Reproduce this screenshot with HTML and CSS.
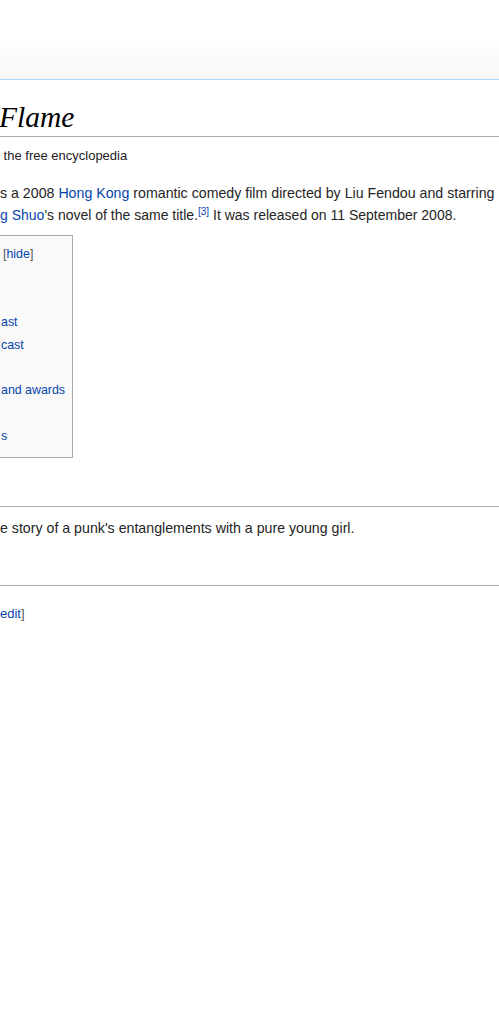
FILE: index.html
```html
<!DOCTYPE html>
<html lang="en">
<head>
    <meta charset="UTF-8">
    <meta name="viewport" content="width=device-width, initial-scale=1.0">
    <title>Flame</title>
    <link rel="stylesheet" href="styles.css">
</head>
<body>
    <div class="head"></div>

    <div class="content">
        <h1 class="first-heading">Flame</h1>
        <div class="site-sub">&nbsp;the free encyclopedia</div>

        <p class="lead">
            s a 2008 <a href="#">Hong Kong</a> romantic comedy film directed by Liu Fendou and starring<br>
            <span class="tight"><a href="#">g Shuo</a>'s novel of the same title.<sup><a href="#">[3]</a></sup> It was released on 11 September 2008.</span>
        </p>

        <div class="toc">
            <div class="toc-title"><span class="bracket">[</span><a href="#">hide</a><span class="bracket">]</span></div>
            <ul>
                <li>&nbsp;</li>
                <li>&nbsp;</li>
                <li><a href="#">ast</a></li>
                <li><a href="#">cast</a></li>
                <li>&nbsp;</li>
                <li><a href="#">and awards</a></li>
                <li>&nbsp;</li>
                <li><a href="#">s</a></li>
            </ul>
        </div>

        <h2>&nbsp;</h2>
        <p>e story of a punk's entanglements with a pure young girl.</p>

        <h2>&nbsp;</h2>
        <h3><span class="edit"><a href="#">edit</a><span class="bracket">]</span></span></h3>
    </div>
</body>
</html>
```

FILE: styles.css
```css
html, body {
    margin: 0;
    padding: 0;
    overflow: hidden;
}

body {
    font-family: "Liberation Sans", Arial, sans-serif;
    font-size: 14.2px;
    color: #252525;
    background: #ffffff;
}

a {
    color: #0645ad;
    text-decoration: none;
}

/* top bar */
.head {
    height: 79px;
    background: linear-gradient(to bottom, #ffffff 0, #ffffff 40px, #f6f6f6 79px);
    border-bottom: 1px solid #a7d7f9;
}

.content {
    white-space: nowrap;
}

.first-heading {
    margin: 0 0 0 -1px;
    padding-top: 19px;
    font-family: "Liberation Serif", Georgia, serif;
    font-style: italic;
    font-weight: normal;
    font-size: 29.5px;
    line-height: 37px;
    color: #000;
    border-bottom: 1px solid #aaaaaa;
}

.site-sub {
    margin-top: 9px;
    font-size: 13px;
    line-height: 20px;
    color: #222;
}

p {
    margin: 0;
    line-height: 22.4px;
}

.lead {
    margin-top: 16px;
}

.tight {
    font-size: 14px;
}

sup {
    font-size: 10px;
    line-height: 1;
    vertical-align: 5px;
}

.toc {
    display: inline-block;
    margin-top: 8px;
    margin-left: -10px;
    padding: 7px 7px 10px 0;
    width: 74px;
    background: #f9f9f9;
    border: 1px solid #aaaaaa;
    font-size: 12.4px;
    white-space: nowrap;
}

.toc-title {
    padding-left: 12px;
    line-height: 22.6px;
}

.toc ul {
    margin: 0;
    padding: 0 0 0 10px;
    list-style: none;
}

.toc li {
    line-height: 22.75px;
}

.bracket {
    color: #555;
}

h2 {
    margin: 16px 0 10px;
    font-family: "Liberation Serif", Georgia, serif;
    font-weight: normal;
    font-size: 21px;
    line-height: 32px;
    border-bottom: 1px solid #aaaaaa;
}

p + h2 {
    margin-top: 13px;
    margin-bottom: 0;
}

h3 {
    margin: 16px 0 0;
    line-height: 22px;
    font-weight: normal;
}

.edit {
    font-size: 13px;
}
```
